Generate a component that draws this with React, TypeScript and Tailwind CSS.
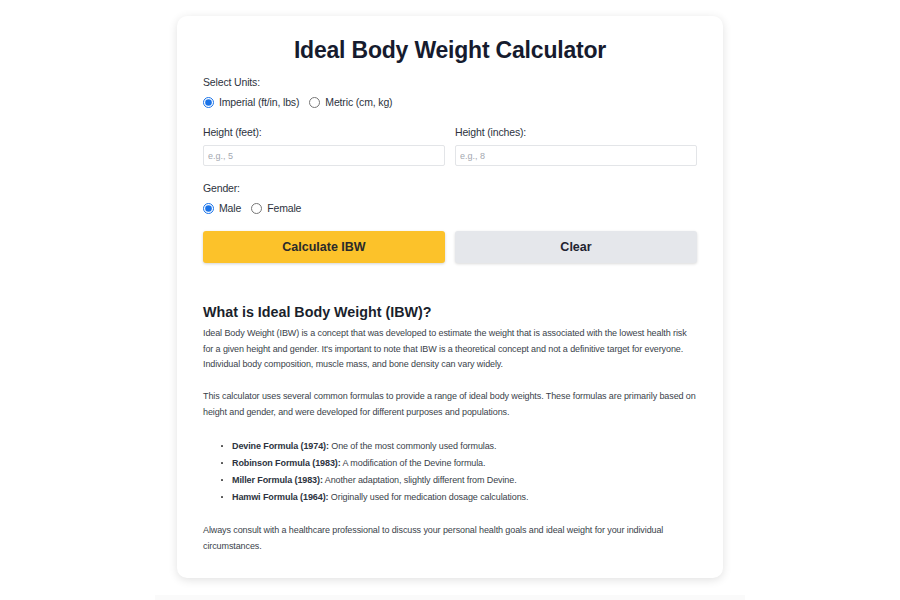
import React, { useState } from 'react';

const formulas = [
  { name: 'Devine Formula (1974):', text: 'One of the most commonly used formulas.' },
  { name: 'Robinson Formula (1983):', text: 'A modification of the Devine formula.' },
  { name: 'Miller Formula (1983):', text: 'Another adaptation, slightly different from Devine.' },
  { name: 'Hamwi Formula (1964):', text: 'Originally used for medication dosage calculations.' },
];

function Radio({ label, checked, onChange }: { label: string; checked: boolean; onChange: () => void }) {
  return (
    <label className="flex items-center gap-[5px] cursor-pointer">
      <input
        type="radio"
        checked={checked}
        onChange={onChange}
        className="m-0 w-[11px] h-[11px] accent-[#1a73e8]"
      />
      <span>{label}</span>
    </label>
  );
}

export default function App() {
  const [units, setUnits] = useState('imperial');
  const [gender, setGender] = useState('male');
  const [feet, setFeet] = useState('');
  const [inches, setInches] = useState('');

  return (
    <div className="min-h-[600px] bg-white font-['Liberation_Sans',Arial,sans-serif] text-[#1f2937] overflow-hidden">
      <div className="mx-auto mt-[16px] w-[546px] rounded-[10px] bg-white px-[26px] pt-[19px] pb-[24px] shadow-[0_2px_10px_rgba(0,0,0,0.12)]">
        <h1 className="text-center text-[23px] leading-[30px] font-bold tracking-[-0.2px] text-[#161b2e]">Ideal Body Weight Calculator</h1>

        <div className="mt-[9px] text-[10.5px] leading-[16px] tracking-[-0.15px] text-[#2d3340]">Select Units:</div>
        <div className="mt-[4px] flex items-center gap-[10px] text-[10.5px] leading-[16px] tracking-[-0.15px] text-[#2d3340]">
          <Radio label="Imperial (ft/in, lbs)" checked={units === 'imperial'} onChange={() => setUnits('imperial')} />
          <Radio label="Metric (cm, kg)" checked={units === 'metric'} onChange={() => setUnits('metric')} />
        </div>

        <div className="mt-[14px] grid grid-cols-2 gap-[10px]">
          <div>
            <div className="text-[10.5px] leading-[16px] tracking-[-0.15px] text-[#2d3340]">Height (feet):</div>
            <input
              value={feet}
              onChange={(e) => setFeet(e.target.value)}
              placeholder="e.g., 5"
              className="mt-[5px] block h-[21px] w-full rounded-[2px] border border-[#e3e5e8] px-[4px] text-[9px] placeholder:text-[#a3a8b0] outline-none"
            />
          </div>
          <div>
            <div className="text-[10.5px] leading-[16px] tracking-[-0.15px] text-[#2d3340]">Height (inches):</div>
            <input
              value={inches}
              onChange={(e) => setInches(e.target.value)}
              placeholder="e.g., 8"
              className="mt-[5px] block h-[21px] w-full rounded-[2px] border border-[#e3e5e8] px-[4px] text-[9px] placeholder:text-[#a3a8b0] outline-none"
            />
          </div>
        </div>

        <div className="mt-[14px] text-[10.5px] leading-[16px] tracking-[-0.15px] text-[#2d3340]">Gender:</div>
        <div className="mt-[4px] flex items-center gap-[10px] text-[10.5px] leading-[16px] tracking-[-0.15px] text-[#2d3340]">
          <Radio label="Male" checked={gender === 'male'} onChange={() => setGender('male')} />
          <Radio label="Female" checked={gender === 'female'} onChange={() => setGender('female')} />
        </div>

        <div className="mt-[15px] grid grid-cols-2 gap-[10px]">
          <button className="h-[32px] rounded-[3px] bg-[#fcc22a] text-[12.5px] font-bold text-[#2a2a2a] shadow-[0_1px_3px_rgba(0,0,0,0.18)]">
            Calculate IBW
          </button>
          <button
            onClick={() => { setFeet(''); setInches(''); }}
            className="h-[32px] rounded-[3px] bg-[#e5e7eb] text-[12.5px] font-bold text-[#1f2430] shadow-[0_1px_3px_rgba(0,0,0,0.15)]"
          >
            Clear
          </button>
        </div>

        <h2 className="mt-[39px] text-[14.3px] leading-[20px] font-bold text-[#1a1f2c]">What is Ideal Body Weight (IBW)?</h2>
        <p className="mt-[4px] text-[9px] leading-[15.5px] tracking-[-0.1px] text-[#3a3f4a]">
          Ideal Body Weight (IBW) is a concept that was developed to estimate the weight that is associated with the lowest health risk for a given height and gender. It's important to note that IBW is a theoretical concept and not a definitive target for everyone. Individual body composition, muscle mass, and bone density can vary widely.
        </p>
        <p className="mt-[16.5px] text-[9px] leading-[15.5px] tracking-[-0.1px] text-[#3a3f4a]">
          This calculator uses several common formulas to provide a range of ideal body weights. These formulas are primarily based on height and gender, and were developed for different purposes and populations.
        </p>

        <ul className="mt-[17.5px] pl-[18px] text-[9px] leading-[17px] tracking-[-0.1px] text-[#3a3f4a]">
          {formulas.map((f) => (
            <li key={f.name} className="flex items-center">
              <span className="mr-[9px] inline-block h-[2px] w-[2px] rounded-[0.5px] bg-[#555]" />
              <span>
                <b className="font-bold text-[#2d3340]">{f.name}</b> {f.text}
              </span>
            </li>
          ))}
        </ul>

        <p className="mt-[17.5px] text-[9px] leading-[15.5px] tracking-[-0.1px] text-[#3a3f4a]">
          Always consult with a healthcare professional to discuss your personal health goals and ideal weight for your individual circumstances.
        </p>
      </div>
      <div className="mx-auto mt-[17px] h-[20px] w-[590px] bg-[#fafafa]" />
    </div>
  );
}
